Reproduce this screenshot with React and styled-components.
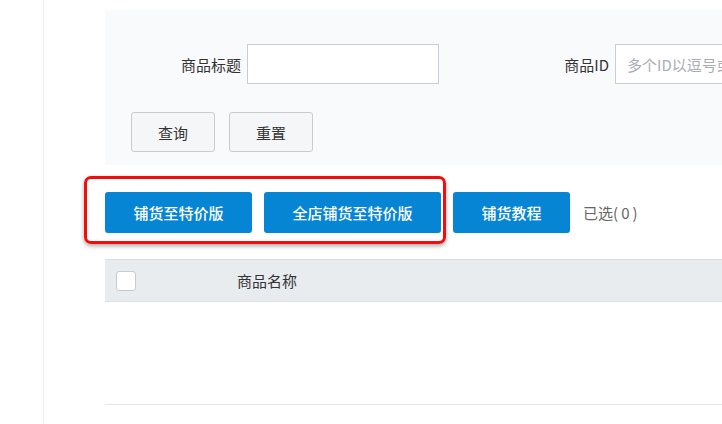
import styled, { createGlobalStyle } from "styled-components";

const GlobalStyle = createGlobalStyle`
  html, body {
    margin: 0;
    padding: 0;
    background: #ffffff;
    overflow: hidden;
  }
  body {
    font-family: "Noto Sans CJK SC", "Noto Sans", sans-serif;
    color: #333333;
  }
`;

const App = () => {
  return (
    <Page>
      <GlobalStyle />
      <Sidebar />
      <Content>
        <FilterPanel>
          <FieldRow>
            <Field>
              <Label>商品标题</Label>
              <Input type="text" />
            </Field>
            <Field $offset={34}>
              <Label>商品ID</Label>
              <Input type="text" placeholder="多个ID以逗号或空格隔开" />
            </Field>
          </FieldRow>
          <ButtonRow>
            <GhostButton>查询</GhostButton>
            <GhostButton>重置</GhostButton>
          </ButtonRow>
        </FilterPanel>

        <ActionBar>
          <Highlight />
          <PrimaryButton>铺货至特价版</PrimaryButton>
          <PrimaryButton>全店铺货至特价版</PrimaryButton>
          <PrimaryButton>铺货教程</PrimaryButton>
          <Selected>
            已选(<Count>0</Count>)
          </Selected>
        </ActionBar>

        <Table>
          <HeaderRow>
            <CheckCell>
              <Checkbox />
            </CheckCell>
            <HeaderCell>商品名称</HeaderCell>
          </HeaderRow>
          <EmptyBody />
        </Table>
      </Content>
    </Page>
  );
};

const Page = styled.div`
  display: flex;
  width: 722px;
  height: 424px;
  overflow: hidden;
`;

const Sidebar = styled.aside`
  flex: 0 0 43px;
  border-right: 1px solid #eef0f3;
`;

const Content = styled.main`
  flex: 0 0 760px;
  padding: 10px 0 0 61px;
  box-sizing: border-box;
`;

const FilterPanel = styled.section`
  height: 155px;
  box-sizing: border-box;
  background: #f9fafb;
  padding: 34px 0 0 26px;
`;

const FieldRow = styled.div`
  display: flex;
  align-items: center;
  margin-left: -26px;
`;

const Field = styled.div`
  display: flex;
  align-items: center;
  gap: 6px;
  margin-left: ${(p) => p.$offset || 0}px;
`;

const Label = styled.label`
  width: 136px;
  text-align: right;
  font-size: 15px;
  color: #333333;
`;

const Input = styled.input`
  width: 192px;
  height: 40px;
  box-sizing: border-box;
  border: 1px solid #c9ced4;
  background: #ffffff;
  padding: 0 11px;
  font-family: inherit;
  font-size: 15px;
  outline: none;

  &::placeholder {
    color: #a9adb3;
  }
`;

const ButtonRow = styled.div`
  display: flex;
  gap: 14px;
  margin-top: 28px;
`;

const GhostButton = styled.button`
  width: 84px;
  height: 40px;
  border: 1px solid #c8ccd1;
  border-radius: 3px;
  background: #f5f6f7;
  color: #333333;
  font-family: inherit;
  font-size: 15px;
  padding: 0;
`;

const ActionBar = styled.div`
  position: relative;
  display: flex;
  align-items: center;
  gap: 12px;
  margin-top: 27px;
  height: 41px;
`;

const Highlight = styled.div`
  position: absolute;
  left: -21px;
  top: -16px;
  width: 362px;
  height: 68px;
  box-sizing: border-box;
  border: 3px solid #f20c0c;
  border-radius: 7px;
  box-shadow: 0 2px 4px rgba(0, 0, 0, 0.35);
  pointer-events: none;
`;

const PrimaryButton = styled.button`
  height: 41px;
  padding: 0 28.5px;
  border: none;
  border-radius: 3px;
  background: #0785d5;
  color: #ffffff;
  font-family: inherit;
  font-size: 15px;
  font-weight: 500;
  white-space: nowrap;
`;

const Selected = styled.span`
  margin-left: 1px;
  font-size: 15px;
  color: #666666;
`;

const Count = styled.span`
  padding: 0 3px;
`;

const Table = styled.div`
  margin-top: 26px;
`;

const HeaderRow = styled.div`
  display: flex;
  align-items: center;
  height: 43px;
  box-sizing: border-box;
  background: #e9ecef;
  border-top: 1px solid #d9dde2;
  border-bottom: 1px solid #dde1e5;
`;

const CheckCell = styled.div`
  width: 132px;
  padding-left: 11px;
  box-sizing: border-box;
  display: flex;
  align-items: center;
`;

const Checkbox = styled.span`
  width: 20px;
  height: 20px;
  box-sizing: border-box;
  border: 1px solid #c6cbd1;
  border-radius: 3px;
  background: #ffffff;
`;

const HeaderCell = styled.div`
  font-size: 15px;
  color: #333333;
`;

const EmptyBody = styled.div`
  height: 102px;
  border-bottom: 1px solid #e2e5e9;
`;

export default App;
